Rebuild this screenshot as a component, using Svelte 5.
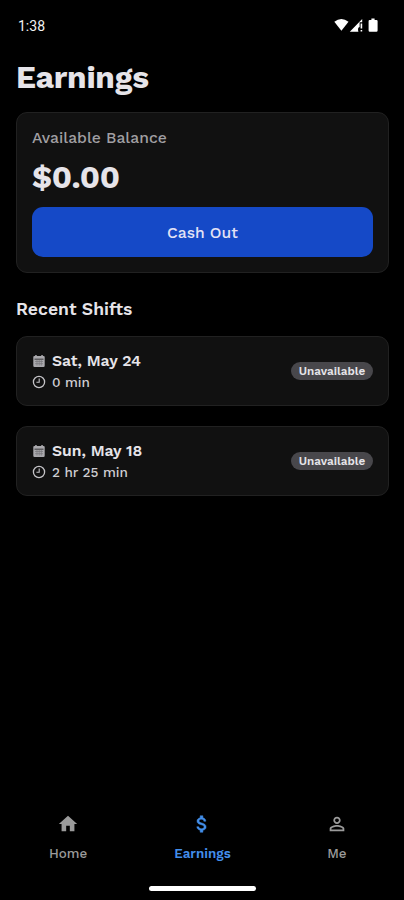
<script lang="ts">
  type Shift = {
    date: string;
    duration: string;
    status: string;
  };

  const shifts: Shift[] = [
    { date: 'Sat, May 24', duration: '0 min', status: 'Unavailable' },
    { date: 'Sun, May 18', duration: '2 hr 25 min', status: 'Unavailable' },
  ];

  const tabs = [
    { name: 'Home', icon: 'M10 20v-6h4v6h5v-8h3L12 3 2 12h3v8z' },
    { name: 'Earnings', icon: 'M11.8 10.9c-2.27-.59-3-1.2-3-2.15 0-1.09 1.01-1.85 2.7-1.85 1.78 0 2.44.85 2.5 2.1h2.21c-.07-1.72-1.12-3.3-3.21-3.81V3h-3v2.16c-1.94.42-3.5 1.68-3.5 3.61 0 2.31 1.91 3.46 4.7 4.13 2.5.6 3 1.48 3 2.41 0 .69-.49 1.79-2.7 1.79-2.06 0-2.87-.92-2.98-2.1h-2.2c.12 2.19 1.76 3.42 3.68 3.83V21h3v-2.15c1.95-.37 3.5-1.5 3.5-3.55 0-2.84-2.43-3.81-4.7-4.4z' },
    { name: 'Me', icon: 'M12 5.9c1.16 0 2.1.94 2.1 2.1s-.94 2.1-2.1 2.1S9.9 9.16 9.9 8s.94-2.1 2.1-2.1m0 9c2.97 0 6.1 1.46 6.1 2.1v1.1H5.9V17c0-.64 3.13-2.1 6.1-2.1M12 4C9.79 4 8 5.79 8 8s1.79 4 4 4 4-1.79 4-4-1.79-4-4-4zm0 9c-2.67 0-8 1.34-8 4v3h16v-3c0-2.66-5.33-4-8-4z' },
  ];

  let active = $state('Earnings');
</script>

<div class="screen">
  <header class="status">
    <span class="time">1:38</span>
    <svg width="51" height="16" viewBox="0 0.5 51 16" fill="#fff">
      <path d="M0.3 4.2Q7.3-1.2 14.5 4.2L7.4 13.3z" />
      <path d="M15.8 14.2 28.2 1.4V4.8h-2.6v4.6q-2.4.8-1.2 4.8z" />
      <path d="M26.6 6h1.6v5h-1.6zM26.6 12.4h1.6V14h-1.6z" />
      <path d="M37.4 1h3.2v1.4h1.8q1.2 0 1.2 1.2v9.4q0 1.2-1.2 1.2h-6.6q-1.2 0-1.2-1.2V3.6q0-1.2 1.2-1.2h1.6z" />
    </svg>
  </header>

  <main>
    <h1>Earnings</h1>

    <section class="card balance">
      <p class="label">Available Balance</p>
      <p class="amount">$0.00</p>
      <button class="cash-out">Cash Out</button>
    </section>

    <h2>Recent Shifts</h2>

    {#each shifts as { date, duration, status }}
      <article class="card shift">
        <div>
          <p class="date">
            <svg width="14" height="14" viewBox="0 0 14 14">
              <path fill="#aaa9ad" fill-rule="evenodd" d="M3.2.9h1.5v1h4.6v-1h1.5v1h.7q1.2 0 1.2 1.2v8.6q0 1.2-1.2 1.2h-9q-1.2 0-1.2-1.2V3.1q0-1.2 1.2-1.2h.7zM2.5 4.7v.8h9v-.8z" />
              <path stroke="#77767a" stroke-width=".7" fill="none" d="M3 7.5h8M3 9.7h8M5 6v5.5M7.2 6v5.5M9.3 6v5.5" />
            </svg>
            <span>{date}</span>
          </p>
          <p class="duration">
            <svg width="14" height="14" viewBox="0 0 14 14" fill="none" stroke="#c5c4c8">
              <circle cx="7" cy="7" r="5.6" stroke-width="1.3" />
              <path stroke-width="1.1" d="M7.2 3.6V7.2H4.4" />
            </svg>
            <span>{duration}</span>
          </p>
        </div>
        <span class="badge">{status}</span>
      </article>
    {/each}
  </main>

  <nav>
    {#each tabs as { name, icon }}
      <button class="tab" class:active={active === name} onclick={() => (active = name)}>
        <svg width="22" height="22" viewBox="0 0 24 24" fill="currentColor">
          <path d={icon} />
        </svg>
        <span>{name}</span>
      </button>
    {/each}
  </nav>
  <div class="handle"></div>
</div>

<style>
  :global(body) {
    margin: 0;
    background: #000;
  }

  .screen {
    display: flex;
    flex-direction: column;
    box-sizing: border-box;
    width: 404px;
    height: 900px;
    background: #000;
    color: #e6e4e9;
    font-family: 'Work Sans', Inter, sans-serif;
    white-space: nowrap;
  }

  h1, h2, p {
    margin: 0;
  }

  button {
    padding: 0;
    border: 0;
    font-family: inherit;
  }

  .status {
    display: flex;
    justify-content: space-between;
    height: 34px;
    padding: 18px 19px 0 18px;
    box-sizing: border-box;
  }

  .time {
    font: 400 14px/16px Roboto, sans-serif;
    color: #f2f2f2;
  }

  main {
    flex: 1;
    padding: 0 15px 0 16px;
  }

  h1 {
    height: 78px;
    font-size: 31.5px;
    font-weight: 700;
    line-height: 87px;
    letter-spacing: -0.2px;
  }

  .card {
    box-sizing: border-box;
    border: 1px solid #212121;
    border-radius: 11px;
    background: #111;
  }

  .balance {
    height: 161px;
    padding: 15px 15px 15px;
  }

  .label {
    font-size: 15.7px;
    font-weight: 500;
    line-height: 20px;
    color: #a09fa2;
  }

  .amount {
    height: 59px;
    font-size: 31.5px;
    font-weight: 700;
    line-height: 59px;
    letter-spacing: -0.4px;
  }

  .cash-out {
    display: block;
    width: 100%;
    height: 50px;
    border-radius: 11px;
    background: #1549c7;
    color: #e3e2f5;
    font-size: 15.7px;
    font-weight: 500;
  }

  h2 {
    height: 63px;
    font-size: 17.6px;
    font-weight: 600;
    line-height: 73px;
  }

  .shift {
    display: flex;
    align-items: center;
    justify-content: space-between;
    height: 70px;
    padding: 0 15px;
    margin-bottom: 20px;
  }

  .date, .duration {
    display: flex;
    align-items: center;
    gap: 6px;
    height: 21px;
  }

  .date {
    font-size: 15.7px;
    font-weight: 600;
  }

  .duration {
    font-size: 13.6px;
    font-weight: 500;
    color: #cecdd1;
  }

  .badge {
    width: 82px;
    border-radius: 9px;
    background: #48474b;
    font-size: 11.7px;
    font-weight: 600;
    line-height: 18px;
    text-align: center;
  }

  nav {
    display: flex;
    height: 73px;
    padding-left: 1px;
  }

  .tab {
    flex: 1;
    display: flex;
    flex-direction: column;
    align-items: center;
    gap: 11px;
    background: none;
    color: #9b9b9b;
    font-size: 13.4px;
    font-weight: 500;
    line-height: 16px;
  }

  .tab.active {
    color: #438eea;
    font-weight: 600;
  }

  .tab.active path {
    stroke: currentColor;
    stroke-width: 0.5px;
  }

  .handle {
    width: 107px;
    height: 5px;
    margin: 0 auto 9px;
    border-radius: 3px;
    background: #fff;
  }
</style>
